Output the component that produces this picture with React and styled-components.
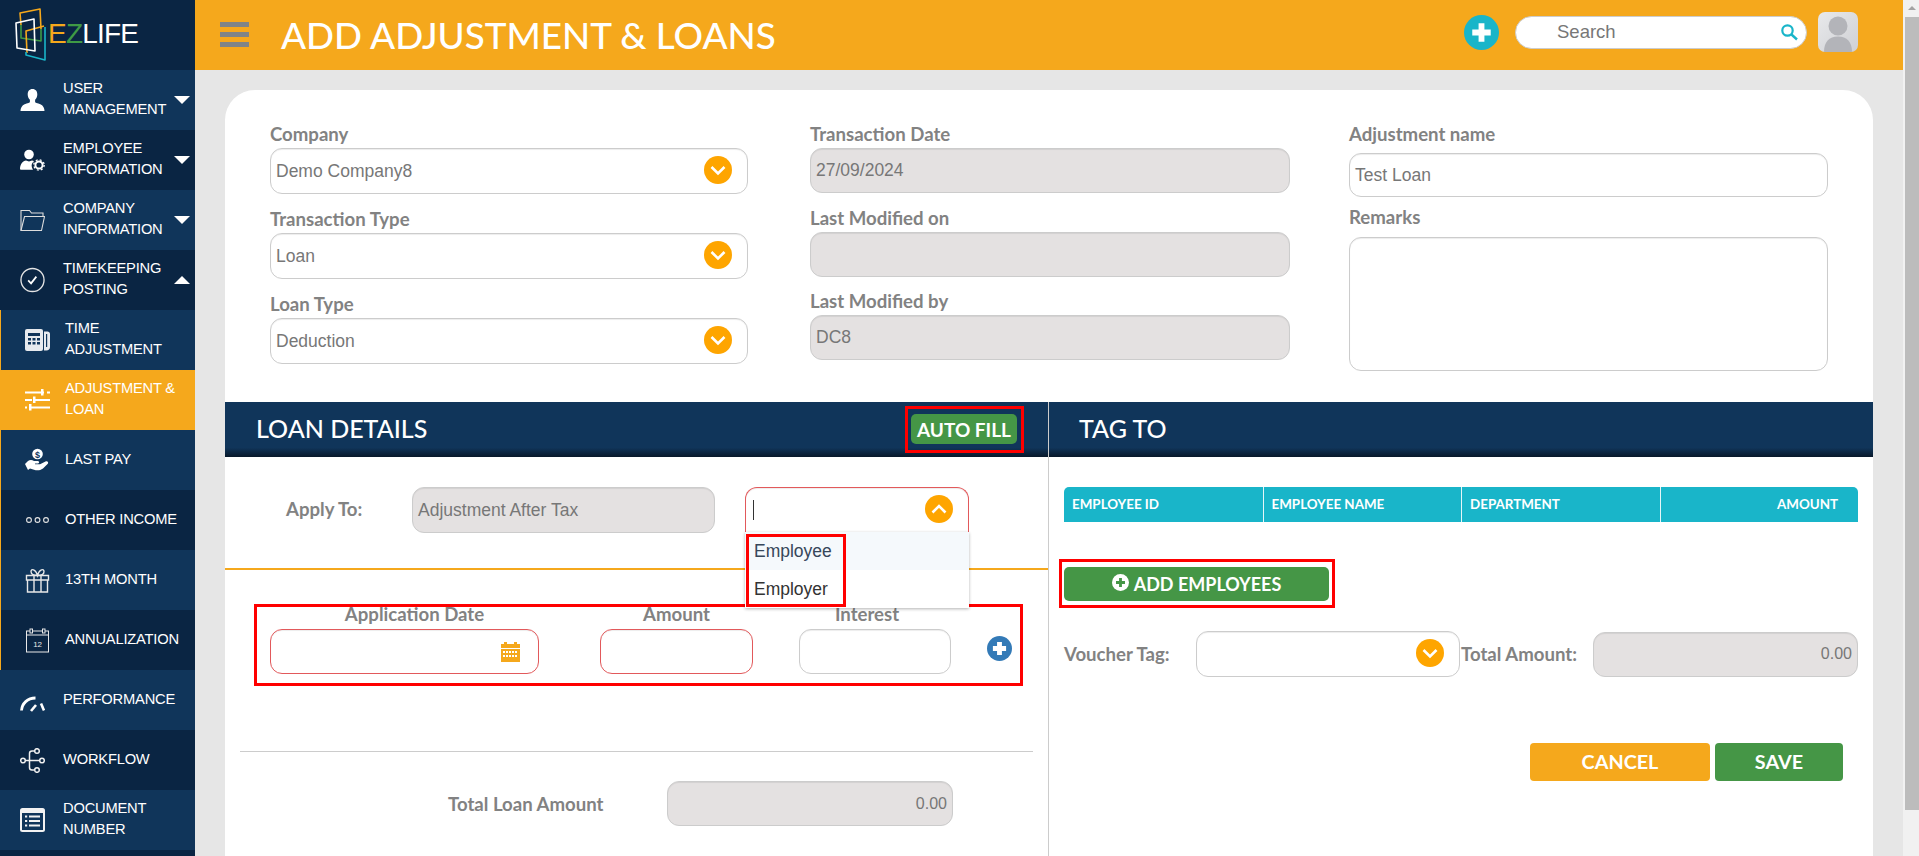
import React from 'react'
import styled, { createGlobalStyle } from 'styled-components'

const GlobalStyle = createGlobalStyle`
  html, body {
    margin: 0;
    padding: 0;
    background: #e6e6e6;
  }
  * {
    box-sizing: border-box;
  }
`

const ORANGE = '#f5a81c'
const NAVY = '#10355a'
const DARK = '#0a2543'
const TEAL = '#19b5c9'
const GREEN = '#459646'
const LABEL_FONT = '"Lato", "Open Sans", sans-serif'
const TEXT_FONT = '"Liberation Sans", Arial, sans-serif'

const Shell = styled.div`
  display: flex;
  width: 1919px;
  height: 856px;
  overflow: hidden;
  font-family: ${TEXT_FONT};
`

/* sidebar */

const Sidebar = styled.nav`
  flex: 0 0 195px;
  width: 195px;
  min-width: 0;
  display: flex;
  flex-direction: column;
  background: ${DARK};
`

const Brand = styled.div`
  display: flex;
  align-items: center;
  height: 70px;
  padding-left: 14px;
`

const BrandName = styled.span`
  margin-left: 0;
  margin-top: -3px;
  font-size: 28px;
  letter-spacing: -0.8px;
  color: #fff;
`

const BrandPart = styled.span`
  color: ${(props) => props.color};
`

const MenuItem = styled.div`
  display: flex;
  align-items: center;
  flex: 0 0 60px;
  padding-left: ${(props) => (props.$sub ? '24px' : '20px')};
  color: #fff;
  font-size: 14.7px;
  line-height: 21px;
  text-transform: uppercase;
  letter-spacing: -0.2px;
  border-left: ${(props) => (props.$sub ? `1px solid ${ORANGE}` : 'none')};
  background: ${(props) =>
    props.$tone === 'active' ? ORANGE : props.$tone === 'dark' ? DARK : NAVY};
`

const MenuIcon = styled.span`
  display: flex;
  align-items: center;
  justify-content: center;
  flex: 0 0 25px;
  width: 25px;
  height: 26px;
  margin-right: ${(props) => (props.$sub ? '15px' : '18px')};
`

const MenuLabel = styled.span`
  flex: 0 0 ${(props) => (props.$short ? 105 : 120)}px;
  margin-top: -2px;
`

const Caret = styled.span`
  width: 0;
  height: 0;
  margin-left: auto;
  margin-right: 5px;
  border-left: 8px solid transparent;
  border-right: 8px solid transparent;
  border-top: ${(props) => (props.$up ? 'none' : '8px solid #fff')};
  border-bottom: ${(props) => (props.$up ? '8px solid #fff' : 'none')};
`

/* top bar */

const Main = styled.div`
  flex: 0 0 1708px;
  display: flex;
  flex-direction: column;
  min-width: 0;
`

const TopBar = styled.header`
  display: flex;
  align-items: center;
  flex: 0 0 70px;
  padding-left: 25px;
  background: ${ORANGE};
`

const Burger = styled.div`
  display: flex;
  flex-direction: column;
  justify-content: space-between;
  width: 29px;
  height: 25px;
  margin-right: 32px;
  margin-top: -1px;
  span {
    display: block;
    height: 5px;
    background: #7f8487;
  }
`

const PageTitle = styled.h1`
  margin: 0;
  font-family: ${LABEL_FONT};
  font-size: 36.8px;
  font-weight: 500;
  color: #fff;
  text-transform: uppercase;
  white-space: nowrap;
`

const TopActions = styled.div`
  display: flex;
  align-items: center;
  margin-left: auto;
  margin-right: 45px;
  margin-top: -6px;
`

const RoundAdd = styled.span`
  display: flex;
  width: 35px;
  height: 35px;
  margin-right: 16px;
`

const SearchBox = styled.div`
  display: flex;
  align-items: center;
  justify-content: space-between;
  width: 292px;
  height: 33px;
  margin-right: 11px;
  padding: 0 8px 0 41px;
  background: #fff;
  border: 1px solid #ccc;
  border-radius: 17px;
  color: #777;
  font-size: 18.5px;
`

const Avatar = styled.div`
  width: 40px;
  height: 40px;
  border-radius: 7px;
  overflow: hidden;
  background: linear-gradient(135deg, #e8e9eb, #cfd0d4);
`

/* page and card */

const Content = styled.main`
  flex: 1;
  padding: 20px 30px 0;
  background: #e6e6e6;
  overflow: hidden;
`

const Card = styled.section`
  width: 1648px;
  height: 766px;
  background: #fff;
  border-radius: 30px 30px 0 0;
`

const TopForm = styled.div`
  display: flex;
  height: 312px;
  padding: 32px 0 0 45px;
`

const FormColumn = styled.div`
  display: flex;
  flex-direction: column;
  width: ${(props) => props.$width}px;
  margin-right: ${(props) => props.$right || 0}px;
  gap: ${(props) => props.$gap}px;
`

const Field = styled.div`
  display: flex;
  flex-direction: column;
`

const FieldLabel = styled.label`
  display: block;
  height: 26px;
  margin-bottom: ${(props) => props.$below || 0}px;
  font-family: ${LABEL_FONT};
  font-size: 18.6px;
  font-weight: 700;
  line-height: 24px;
  color: #828282;
  white-space: nowrap;
`

const Control = styled.div`
  display: flex;
  align-items: center;
  justify-content: ${(props) => (props.$end ? 'flex-end' : 'space-between')};
  flex: 0 0 auto;
  width: ${(props) => (props.$width ? `${props.$width}px` : '100%')};
  height: ${(props) => props.$height || 46}px;
  padding: ${(props) => (props.$end ? '0 5px 0 5px' : '0 15px 0 5px')};
  font-size: ${(props) => (props.$end ? 16 : 17.5)}px;
  color: #777;
  background: ${(props) => (props.$disabled ? '#e4e1e1' : '#fff')};
  border: 1px solid ${(props) => (props.$error ? '#e2595b' : '#ccc')};
  border-bottom: ${(props) =>
    props.$open ? 'none' : `1px solid ${props.$error ? '#e2595b' : '#ccc'}`};
  border-radius: ${(props) => (props.$open ? '12px 12px 0 0' : '12px')};
  box-shadow: inset 0 1px 1px rgba(0, 0, 0, 0.075);
`

const Chevron = styled.span`
  display: flex;
  width: 28px;
  height: 28px;
  margin-top: -3px;
`

const DateSlot = styled.span`
  display: flex;
  margin-right: 3px;
`

/* lower panes */

const Panes = styled.div`
  display: flex;
`

const Pane = styled.div`
  flex: ${(props) => (props.$left ? '0 0 824px' : '1')};
  height: 454px;
  border-right: ${(props) => (props.$left ? '1px solid #ccc' : 'none')};
`

const Band = styled.div`
  display: flex;
  align-items: center;
  justify-content: space-between;
  height: 55px;
  padding: 0 24px 0 ${(props) => props.$inset}px;
  background: linear-gradient(to bottom, ${NAVY} 0, ${NAVY} 83%, #08182a 100%);
`

const BandTitle = styled.h2`
  margin: -4px 0 0;
  font-family: ${LABEL_FONT};
  font-size: 25px;
  font-weight: 500;
  color: #fff;
  text-transform: uppercase;
  white-space: nowrap;
`

const Marked = styled.div`
  border: 3px solid #f00;
`

const AutoFillMark = styled(Marked)`
  width: 119px;
  height: 47px;
  padding: 5px 4px 6px 3px;
`

const GreenButton = styled.button`
  display: flex;
  align-items: center;
  justify-content: center;
  width: 100%;
  height: 100%;
  padding: 0;
  font-family: ${LABEL_FONT};
  font-size: ${(props) => props.$size}px;
  font-weight: 700;
  color: #fff;
  text-transform: uppercase;
  white-space: nowrap;
  background: ${GREEN};
  border: none;
  border-radius: 5px;
`

const ApplyRow = styled.div`
  display: flex;
  align-items: flex-start;
  height: 113px;
  padding: 30px 0 0 61px;
  border-bottom: 2px solid ${ORANGE};
`

const ApplyLabel = styled(FieldLabel)`
  width: 126px;
  margin-top: 10px;
`

const SelectWrap = styled.div`
  position: relative;
  width: 224px;
  margin-left: 30px;
`

const TextCaret = styled.span`
  display: block;
  width: 1px;
  height: 20px;
  margin-left: 2px;
  background: #333;
`

const Dropdown = styled.ul`
  position: absolute;
  top: 45px;
  left: 0;
  z-index: 5;
  width: 224px;
  margin: 0;
  padding: 0;
  list-style: none;
  background: #fff;
  box-shadow: 0 1px 3px rgba(0, 0, 0, 0.3);
`

const DropdownOption = styled.li`
  height: 38px;
  padding-left: 9px;
  font-size: 17.5px;
  line-height: 38px;
  color: ${(props) => (props.$hover ? '#37475a' : '#333')};
  background: ${(props) => (props.$hover ? '#f5f9fc' : '#fff')};
`

const OptionMark = styled.div`
  position: absolute;
  top: 2px;
  left: 1px;
  width: 100px;
  height: 73px;
  border: 3px solid #f00;
`

const LineMark = styled(Marked)`
  display: flex;
  align-items: flex-start;
  width: 769px;
  height: 82px;
  margin: 34px 0 0 29px;
  padding-left: 13px;
`

const LineField = styled.div`
  width: ${(props) => props.$width}px;
  margin-right: ${(props) => props.$right}px;
`

const LineLabel = styled(FieldLabel)`
  height: 16px;
  margin-bottom: 6px;
  line-height: 14px;
  text-align: center;
  padding-left: ${(props) => props.$shift || 0}px;
  padding-right: ${(props) => props.$back || 0}px;
`

const SmallAdd = styled.span`
  display: flex;
  width: 25px;
  height: 25px;
  margin: 29px 0 0 -0.5px;
`

const Rule = styled.hr`
  height: 1px;
  margin: 65px 15px 0;
  border: none;
  background: #ccc;
`

const TotalRow = styled.div`
  display: flex;
  align-items: center;
  margin-top: 29px;
  padding-left: 223px;
`

const TotalLabel = styled(FieldLabel)`
  width: ${(props) => props.$width}px;
  flex: 0 0 auto;
  line-height: 26px;
  padding-left: ${(props) => props.$shift || 0}px;
`

const TableHead = styled.div`
  display: grid;
  grid-template-columns: repeat(4, 1fr);
  height: 35px;
  margin: 30px 15px 0;
  background: ${TEAL};
  border-radius: 5px 5px 0 0;
`

const HeadCell = styled.div`
  padding: 0 ${(props) => (props.$right ? '20px' : '8px')};
  font-family: ${LABEL_FONT};
  font-size: 13.4px;
  font-weight: 700;
  line-height: 34px;
  color: #fff;
  text-align: ${(props) => (props.$right ? 'right' : 'left')};
  text-transform: uppercase;
  white-space: nowrap;
  border-left: ${(props) => (props.$first ? 'none' : '1px solid #e6f6f8')};
`

const AddMark = styled(Marked)`
  width: 276px;
  height: 49px;
  margin: 37px 0 0 10px;
  padding: 5px 3px 4px 2px;
`

const AddGlyph = styled.span`
  display: flex;
  width: 17px;
  height: 17px;
  margin: -3px 5px 0 0;
`

const VoucherRow = styled.div`
  display: flex;
  align-items: center;
  margin: 23px 15px 0;
`

const FormActions = styled.div`
  display: flex;
  justify-content: flex-end;
  gap: 5px;
  margin: 66px 30px 0 0;
`

const ActionButton = styled.button`
  width: ${(props) => props.$width}px;
  height: 38px;
  padding: 0 0 2px;
  font-family: ${LABEL_FONT};
  font-size: 19.8px;
  font-weight: 700;
  color: #fff;
  text-transform: uppercase;
  background: ${(props) => props.$color};
  border: none;
  border-radius: 4px;
`

/* scrollbar */

const ScrollTrack = styled.div`
  flex: 0 0 16px;
  padding: 0 0 0 2px;
  background: #f1f1f1;
`

const ScrollArrow = styled.div`
  width: 0;
  height: 0;
  margin: 6px 0 7px 3px;
  border-left: 4px solid transparent;
  border-right: 4px solid transparent;
  border-bottom: 4px solid #a3a3a3;
`

const ScrollThumb = styled.div`
  width: 14px;
  height: 793px;
  background: #bcbcbc;
`

/* drawings */

const LogoMark = () => (
  <svg width='34' height='56' viewBox='0 0 34 56' fill='none' strokeWidth='1.6' strokeLinejoin='round'>
    <path d='M7 18 V31 L27 34 V22' stroke='#3f9a45' />
    <path d='M7 18 L6 6 L26 2 L27 22' stroke={ORANGE} />
    <path d='M13 46 L12 24 L30 19' stroke={ORANGE} />
    <path d='M2 16 L20 12 L21 44 L3 41 Z' stroke='#fff' />
    <path d='M31 20 V53 L12 48 V45' stroke={TEAL} />
  </svg>
)

const UserIcon = () => (
  <svg width='25' height='24' viewBox='0 0 25 24' fill='#fff'>
    <path d='M12.5 1c-3.2 0-4.8 2.4-4.8 5.4 0 2.2.9 4.2 2.2 5.4v2.4c-1.4.9-5 1.6-7 3C1.500 18.900 .5 20.500 .5 23h24c0-2.500-1-4.100-2.400-5.800-2-1.400-5.600-2.100-7-3v-2.400c1.300-1.200 2.200-3.200 2.200-5.400C17.300 3.400 15.700 1 12.500 1z' />
  </svg>
)

const UserGearIcon = () => (
  <svg width='25' height='22' viewBox='0 0 25 22' fill='#fff'>
    <circle cx='9' cy='5.500' r='4.800' />
    <path d='M0 20c0-5 3-8 6-8.500l3 1 3-1c.8.100 1.500.400 2 .800-2 1.500-3 3.500-2 6.500l1 2H1.500C.5 20.800 0 20.500 0 20z' />
    <circle cx='19' cy='16' r='3.600' fill='none' stroke='#fff' strokeWidth='2' />
    <circle cx='19' cy='16' r='5.200' fill='none' stroke='#fff' strokeWidth='1.300' strokeDasharray='2 2.100' />
  </svg>
)

const FolderIcon = () => (
  <svg width='25' height='23' viewBox='0 0 25 23' fill='none' stroke='#ddd' strokeWidth='1.100'>
    <path d='M1 21.500 V1.500 H9.500 L11.500 4 H23 V7.500' />
    <path d='M1 21.500 H21.500 L24.500 7.500 H4.500 Z' />
  </svg>
)

const CheckIcon = () => (
  <svg width='26' height='26' viewBox='0 0 26 26' fill='none' stroke='#e4e4e4'>
    <circle cx='13' cy='13' r='12' strokeWidth='1.400' />
    <path d='M8.500 13.500 L11.500 16.500 L17 9.500' strokeWidth='1.800' stroke='#fff' />
  </svg>
)

const FaxIcon = () => (
  <svg width='25' height='24' viewBox='0 0 25 24' fill='#e7eaee'>
    <rect x='0' y='1' width='18' height='22' rx='2' />
    <path d='M19 3.500h3.500c1.300 0 2.500 1 2.500 2.500v13c0 2-1.500 3.500-3.500 3.500H19z' />
    <g fill={NAVY}>
      <rect x='3' y='5' width='12' height='3' />
      <rect x='3' y='10' width='3' height='2.500' />
      <rect x='7.500' y='10' width='3' height='2.500' />
      <rect x='12' y='10' width='3' height='2.500' />
      <rect x='3' y='14' width='3' height='2.500' />
      <rect x='7.500' y='14' width='3' height='2.500' />
      <rect x='12' y='14' width='3' height='2.500' />
      <rect x='21' y='6' width='1.200' height='13' />
    </g>
  </svg>
)

const SlidersIcon = () => (
  <svg width='25' height='24' viewBox='0 0 25 24' fill='#fff'>
    <rect x='0' y='3.500' width='19' height='2' />
    <rect x='16' y='1' width='2.500' height='6.500' />
    <rect x='22' y='3.500' width='3' height='2' />
    <rect x='0' y='11' width='7' height='2' />
    <rect x='10' y='11' width='15' height='2' />
    <rect x='8' y='8.500' width='2.500' height='6.500' />
    <rect x='0' y='18.500' width='2' height='2' />
    <rect x='6' y='18.500' width='19' height='2' />
    <rect x='4' y='16' width='2.500' height='6.500' />
  </svg>
)

const HandIcon = () => (
  <svg width='25' height='24' viewBox='0 0 25 24' fill='#fff'>
    <circle cx='12.500' cy='6' r='5.300' />
    <text x='12.500' y='9.500' textAnchor='middle' fontSize='9' fontWeight='700' fill={NAVY} fontFamily='Liberation Sans'>$</text>
    <path d='M0 16l3-3c2-1.300 4-1.200 6 0h4c1.500 0 1.500 2.500 0 2.500h-3v.8h5l6-3c1.600-.4 2.800 1.100 1.800 2.500L18 20.500c-3 2-6 2.300-9 1.200l-4-1.200-2 1.500z' />
  </svg>
)

const DotsIcon = () => (
  <svg width='25' height='10' viewBox='0 0 25 10' fill='none' stroke='#e4e4e4' strokeWidth='1.100'>
    <circle cx='4' cy='5' r='2.400' />
    <circle cx='12.500' cy='5' r='2.400' />
    <circle cx='21' cy='5' r='2.400' />
  </svg>
)

const GiftIcon = () => (
  <svg width='25' height='25' viewBox='0 0 25 25' fill='none' stroke='#e8e8e8' strokeWidth='1.400'>
    <path d='M1.500 7.500 H23.500 V12 H1.500 Z M2.500 12 V24 H22.500 V12 M9 7.500 V24 M16 7.500 V24' />
    <path d='M12.500 7.500 C9 7.500 6 6.500 6 3.500 C6 0.500 10.500 0.800 12.500 7.500 C14.500 0.800 19 0.500 19 3.500 C19 6.500 16 7.500 12.500 7.500 Z' />
  </svg>
)

const CalendarIcon = () => (
  <svg width='25' height='25' viewBox='0 0 25 25' fill='none' stroke='#e8e8e8' strokeWidth='1'>
    <rect x='1.500' y='3' width='22' height='21' />
    <path d='M1.500 7 H23.500' />
    <rect x='5' y='1' width='2.500' height='4' fill={DARK} />
    <rect x='17.500' y='1' width='2.500' height='4' fill={DARK} />
    <text x='12.500' y='19' textAnchor='middle' fontSize='8' fill='#e8e8e8' stroke='none' fontFamily='Liberation Sans'>12</text>
  </svg>
)

const GaugeIcon = () => (
  <svg width='25' height='24' viewBox='0 0 25 24' fill='none' stroke='#fff'>
    <path d='M1.500 22.500 C2 15.500 7.500 10 15.500 10' strokeWidth='2.800' />
    <path d='M21 15.500 L24 22.500' strokeWidth='2.600' />
    <path d='M11 23 L16 17' strokeWidth='2.600' />
  </svg>
)

const FlowIcon = () => (
  <svg width='25' height='25' viewBox='0 0 25 25' fill='none' stroke='#f0f0f0' strokeWidth='1.500'>
    <circle cx='3' cy='12.500' r='2.300' />
    <circle cx='22' cy='12.500' r='2.300' />
    <circle cx='17' cy='3' r='2.300' />
    <circle cx='17' cy='22' r='2.300' />
    <path d='M5.300 12.500 H19.700 M14.700 3 H12 C10.500 3 9.500 4 9.500 5.500 V19.500 C9.500 21 10.500 22 12 22 H14.700' />
  </svg>
)

const ListIcon = () => (
  <svg width='25' height='24' viewBox='0 0 25 24' fill='none'>
    <rect x='0' y='0' width='25' height='24' rx='2.500' fill='#f2f2f2' />
    <rect x='2' y='5' width='21' height='17' fill={NAVY} />
    <g fill='#f2f2f2'>
      <rect x='5' y='7.500' width='2.200' height='2' />
      <rect x='9' y='7.500' width='11' height='2' />
      <rect x='5' y='12' width='2.200' height='2' />
      <rect x='9' y='12' width='11' height='2' />
      <rect x='5' y='16.500' width='2.200' height='2' />
      <rect x='9' y='16.500' width='11' height='2' />
    </g>
  </svg>
)

const ChevronDisc = ({ up }) => (
  <svg width='28' height='28' viewBox='0 0 28 28'>
    <circle cx='14' cy='14' r='14' fill='#fea500' />
    <path
      d={up ? 'M7.500 17.500 L14 11 L20.500 17.500' : 'M7.500 11 L14 17.500 L20.500 11'}
      fill='none'
      stroke='#fff'
      strokeWidth='2.600'
    />
  </svg>
)

const PlusDisc = ({ size, disc, plus, arm }) => (
  <svg width={size} height={size} viewBox='0 0 36 36'>
    <circle cx='18' cy='18' r='18' fill={disc} />
    <path d='M18 8.500 V27.500 M8.500 18 H27.500' stroke={plus} strokeWidth={arm} />
  </svg>
)

const SearchGlyph = () => (
  <svg width='18' height='18' viewBox='0 0 18 18' fill='none' stroke={TEAL}>
    <circle cx='7.500' cy='7.500' r='5.200' strokeWidth='2.200' />
    <path d='M11.500 11.500 L17 16.500' strokeWidth='2.400' />
  </svg>
)

const AvatarFigure = () => (
  <svg width='40' height='40' viewBox='0 0 40 40' fill='#b3b4b9'>
    <circle cx='20' cy='14' r='9.500' />
    <path d='M6 40 C6 30 11 24.500 20 24.500 C29 24.500 34 30 34 40 Z' />
  </svg>
)

const DateGlyph = () => (
  <svg width='19' height='20' viewBox='0 0 19 20' fill={ORANGE}>
    <rect x='3' y='0' width='3' height='4' />
    <rect x='13' y='0' width='3' height='4' />
    <rect x='0' y='2' width='19' height='4' />
    <path d='M0 7 H19 V20 H0 Z M2 9 V11 H4 V9 Z M5 9 V11 H7 V9 Z M8 9 V11 H10 V9 Z M11 9 V11 H13 V9 Z M14 9 V11 H16 V9 Z M2 13 V15 H4 V13 Z M5 13 V15 H7 V13 Z M8 13 V15 H10 V13 Z M11 13 V15 H13 V13 Z M14 13 V15 H16 V13 Z' fillRule='evenodd' />
  </svg>
)

const menu = [
  { label: 'User Management', icon: <UserIcon />, tone: 'light', caret: 'down' },
  { label: 'Employee Information', icon: <UserGearIcon />, tone: 'dark', caret: 'down' },
  { label: 'Company Information', icon: <FolderIcon />, tone: 'light', caret: 'down' },
  { label: 'Timekeeping Posting', icon: <CheckIcon />, tone: 'dark', caret: 'up' },
  { label: 'Time Adjustment', icon: <FaxIcon />, tone: 'light', sub: true },
  { label: 'Adjustment & Loan', icon: <SlidersIcon />, tone: 'active', sub: true },
  { label: 'Last Pay', icon: <HandIcon />, tone: 'light', sub: true },
  { label: 'Other Income', icon: <DotsIcon />, tone: 'dark', sub: true },
  { label: '13th Month', icon: <GiftIcon />, tone: 'light', sub: true },
  { label: 'Annualization', icon: <CalendarIcon />, tone: 'dark', sub: true },
  { label: 'Performance', icon: <GaugeIcon />, tone: 'light' },
  { label: 'Workflow', icon: <FlowIcon />, tone: 'dark' },
  { label: 'Document Number', icon: <ListIcon />, tone: 'light' }
]

const selects = [
  { label: 'Company', value: 'Demo Company8' },
  { label: 'Transaction Type', value: 'Loan' },
  { label: 'Loan Type', value: 'Deduction' }
]

const readOnly = [
  { label: 'Transaction Date', value: '27/09/2024' },
  { label: 'Last Modified on', value: '' },
  { label: 'Last Modified by', value: 'DC8' }
]

const columns = ['Employee ID', 'Employee Name', 'Department', 'Amount']

const App = () => (
  <Shell>
    <GlobalStyle />
    <Sidebar>
      <Brand>
        <LogoMark />
        <BrandName>
          <BrandPart color={ORANGE}>E</BrandPart>
          <BrandPart color='#3f9a45'>Z</BrandPart>
          LIFE
        </BrandName>
      </Brand>
      {menu.map((item) => (
        <MenuItem key={item.label} $tone={item.tone} $sub={item.sub}>
          <MenuIcon $sub={item.sub}>{item.icon}</MenuIcon>
          <MenuLabel $short={item.caret}>{item.label}</MenuLabel>
          {item.caret && <Caret $up={item.caret === 'up'} />}
        </MenuItem>
      ))}
    </Sidebar>

    <Main>
      <TopBar>
        <Burger>
          <span />
          <span />
          <span />
        </Burger>
        <PageTitle>Add Adjustment &amp; Loans</PageTitle>
        <TopActions>
          <RoundAdd>
            <PlusDisc size={35} disc={TEAL} plus='#fff' arm={6} />
          </RoundAdd>
          <SearchBox>
            Search
            <SearchGlyph />
          </SearchBox>
          <Avatar>
            <AvatarFigure />
          </Avatar>
        </TopActions>
      </TopBar>

      <Content>
        <Card>
          <TopForm>
            <FormColumn $width={478} $right={62} $gap={13}>
              {selects.map((item) => (
                <Field key={item.label}>
                  <FieldLabel>{item.label}</FieldLabel>
                  <Control>
                    {item.value}
                    <Chevron>
                      <ChevronDisc />
                    </Chevron>
                  </Control>
                </Field>
              ))}
            </FormColumn>
            <FormColumn $width={480} $right={59} $gap={12.5}>
              {readOnly.map((item) => (
                <Field key={item.label}>
                  <FieldLabel>{item.label}</FieldLabel>
                  <Control $disabled $height={45}>
                    {item.value}
                  </Control>
                </Field>
              ))}
            </FormColumn>
            <FormColumn $width={479} $gap={8}>
              <Field>
                <FieldLabel $below={5}>Adjustment name</FieldLabel>
                <Control $height={44}>Test Loan</Control>
              </Field>
              <Field>
                <FieldLabel $below={6}>Remarks</FieldLabel>
                <Control $height={134} />
              </Field>
            </FormColumn>
          </TopForm>

          <Panes>
            <Pane $left>
              <Band $inset={31}>
                <BandTitle>Loan Details</BandTitle>
                <AutoFillMark>
                  <GreenButton $size={19}>Auto Fill</GreenButton>
                </AutoFillMark>
              </Band>

              <ApplyRow>
                <ApplyLabel>Apply To:</ApplyLabel>
                <Control $disabled $width={303}>
                  Adjustment After Tax
                </Control>
                <SelectWrap>
                  <Control $error $open $height={45}>
                    <TextCaret />
                    <Chevron>
                      <ChevronDisc up />
                    </Chevron>
                  </Control>
                  <Dropdown>
                    <DropdownOption $hover>Employee</DropdownOption>
                    <DropdownOption>Employer</DropdownOption>
                    <OptionMark />
                  </Dropdown>
                </SelectWrap>
              </ApplyRow>

              <LineMark>
                <LineField $width={269} $right={61}>
                  <LineLabel $shift={20}>Application Date</LineLabel>
                  <Control $error $height={45}>
                    <span />
                    <DateSlot>
                      <DateGlyph />
                    </DateSlot>
                  </Control>
                </LineField>
                <LineField $width={153} $right={46}>
                  <LineLabel>Amount</LineLabel>
                  <Control $error $height={45} />
                </LineField>
                <LineField $width={152} $right={36}>
                  <LineLabel $back={16}>Interest</LineLabel>
                  <Control $height={45} />
                </LineField>
                <SmallAdd>
                  <PlusDisc size={25} disc='#337ab7' plus='#fff' arm={7} />
                </SmallAdd>
              </LineMark>

              <Rule />

              <TotalRow>
                <TotalLabel $width={219}>Total Loan Amount</TotalLabel>
                <Control $disabled $end $width={286} $height={45}>
                  0.00
                </Control>
              </TotalRow>
            </Pane>

            <Pane>
              <Band $inset={30}>
                <BandTitle>Tag To</BandTitle>
              </Band>

              <TableHead>
                {columns.map((name, index) => (
                  <HeadCell key={name} $first={index === 0} $right={index === 3}>
                    {name}
                  </HeadCell>
                ))}
              </TableHead>

              <AddMark>
                <GreenButton $size={18}>
                  <AddGlyph>
                    <PlusDisc size={17} disc='#fff' plus={GREEN} arm={6} />
                  </AddGlyph>
                  Add Employees
                </GreenButton>
              </AddMark>

              <VoucherRow>
                <TotalLabel $width={132}>Voucher Tag:</TotalLabel>
                <Control $width={264}>
                  <span />
                  <Chevron>
                    <ChevronDisc />
                  </Chevron>
                </Control>
                <TotalLabel $width={133} $shift={1}>
                  Total Amount:
                </TotalLabel>
                <Control $disabled $end $width={265} $height={45}>
                  0.00
                </Control>
              </VoucherRow>

              <FormActions>
                <ActionButton $width={180} $color={ORANGE}>
                  Cancel
                </ActionButton>
                <ActionButton $width={128} $color={GREEN}>
                  Save
                </ActionButton>
              </FormActions>
            </Pane>
          </Panes>
        </Card>
      </Content>
    </Main>

    <ScrollTrack>
      <ScrollArrow />
      <ScrollThumb />
    </ScrollTrack>
  </Shell>
)

export default App
